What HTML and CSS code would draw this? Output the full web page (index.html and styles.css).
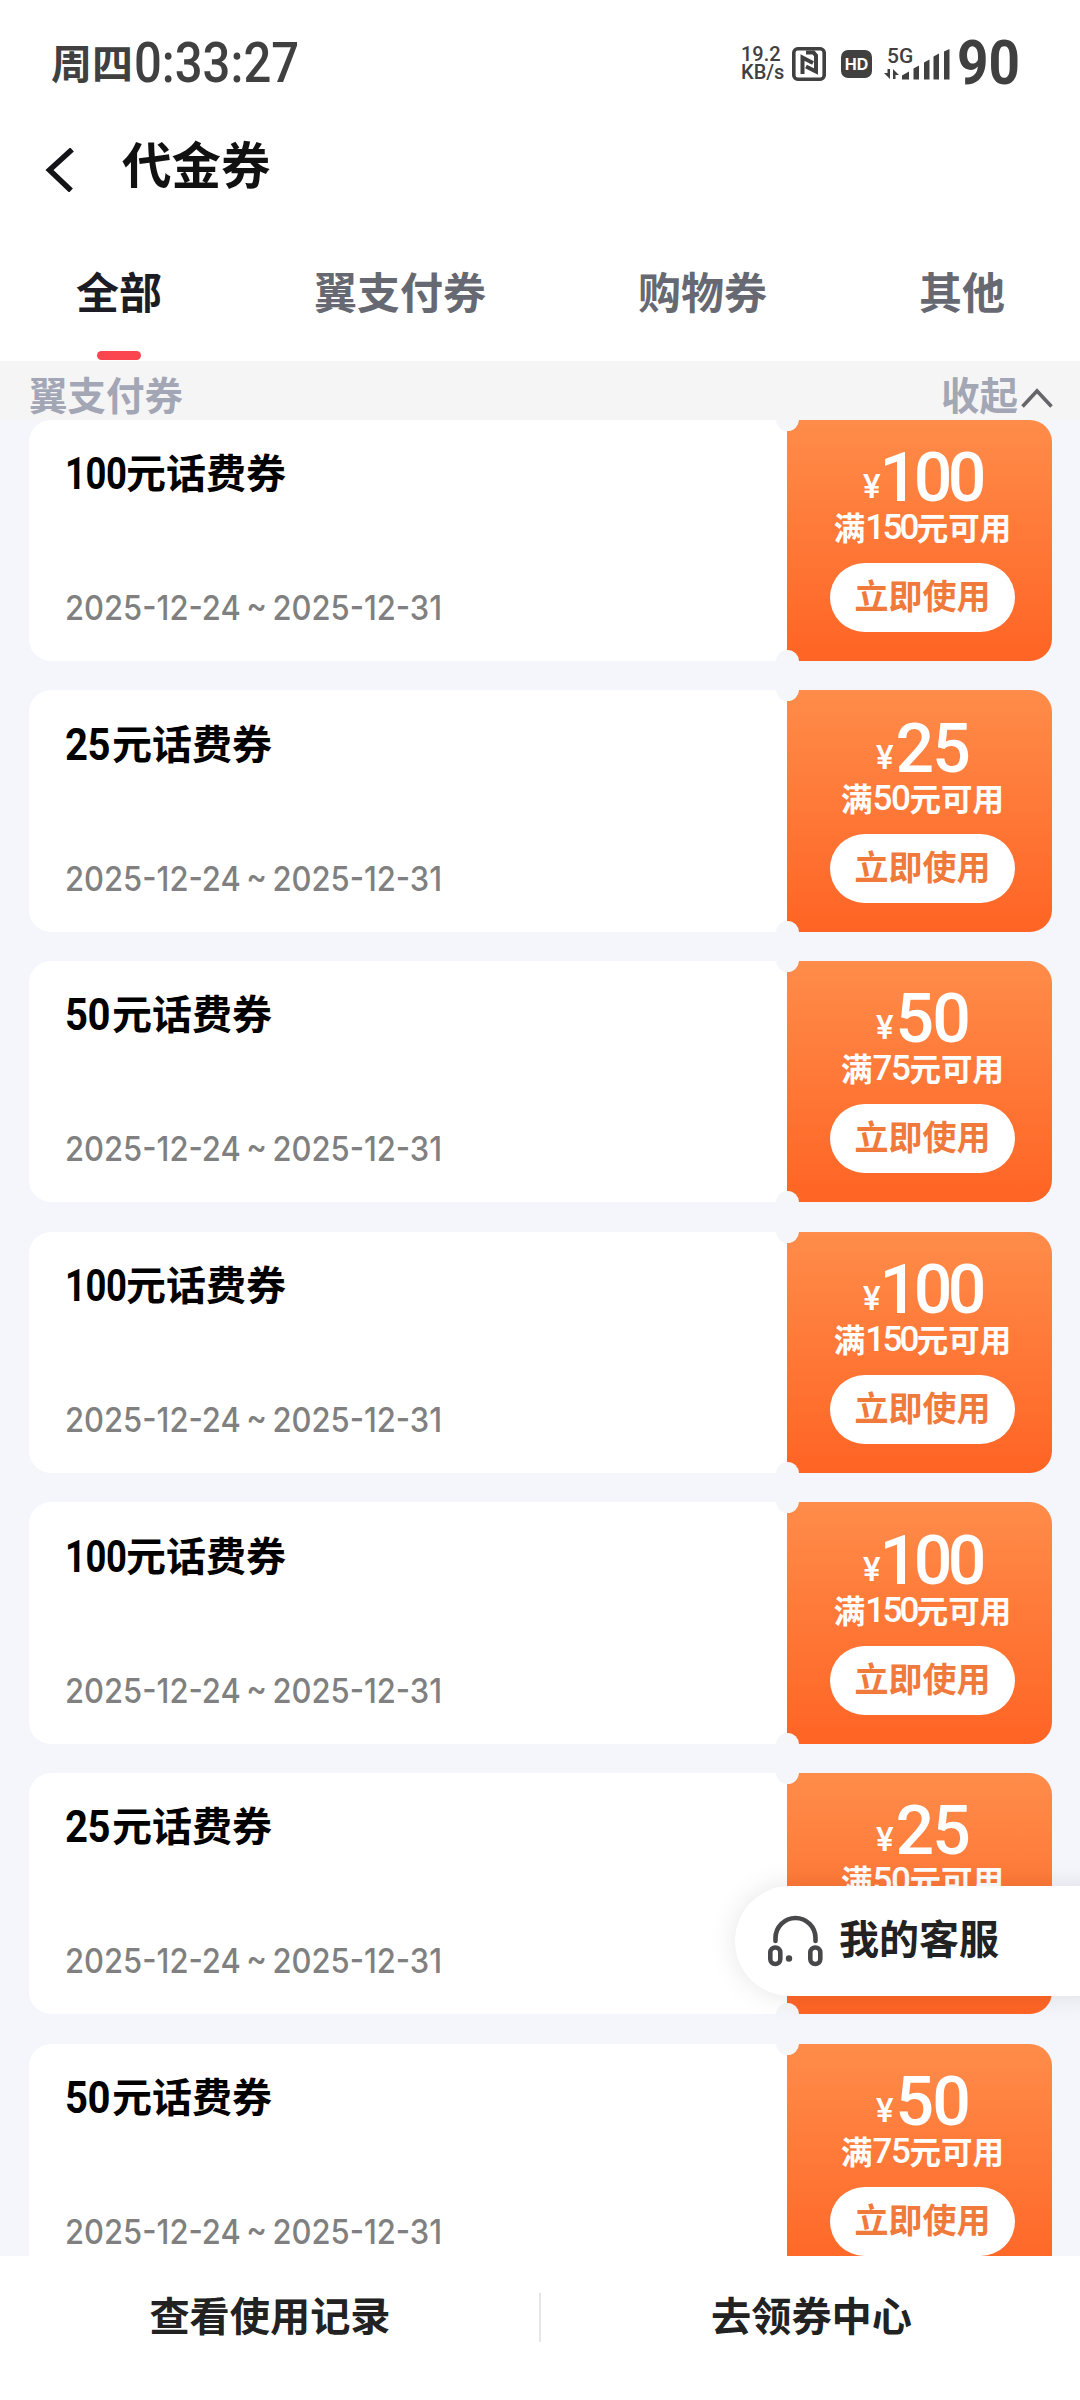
FILE: index.html
```
<!DOCTYPE html>
<html lang="zh-CN">
<head>
<meta charset="utf-8">
<title>代金券</title>
<link rel="stylesheet" href="styles.css">
</head>
<body>
<div class="screen">
  <header class="top">
    <div class="status">
      <div class="clock"><span class="day">周四</span><span class="time">0:33:27</span></div>
      <div class="indicators">
        <div class="speed"><span>19.2</span><span>KB/s</span></div>
        <svg class="nfc" viewBox="0 0 34 34"><rect x="1.8" y="1.800" width="30.4" height="30.4" rx="4" fill="none" stroke="#404040" stroke-width="3.600"/><path d="M10.500 27V10.500L21 16M14 5.500h7.500l2.500 3V24.500L14 19.500" fill="none" stroke="#404040" stroke-width="4"/></svg>
        <span class="hd">HD</span>
        <div class="net">
          <span class="gen">5G</span>
          <svg class="signal" viewBox="0 0 66 32"><path d="M0 24h3.500v-4h2.500v10zM9 30V20l6 6h-3.500v4z" fill="#404040"/><path d="M18 30.500v-4l7-4v8zM29.500 30.500v-11l5.500-3v14zM40 30.500v-17l5.500-3v20zM49.500 30.500V7.500l5.500-3v26zM60 30.500v-28l5.500-2.500v30.500z" fill="#404040"/></svg>
        </div>
        <span class="battery">90</span>
      </div>
    </div>
    <div class="titlebar">
      <svg class="back" viewBox="0 0 30 44"><path d="M27 1.500L4.500 22 26 42.500" fill="none" stroke="#141418" stroke-width="5.500"/></svg>
      <h1>代金券</h1>
    </div>
    <nav class="tabs">
      <a class="tab active">全部</a>
      <a class="tab">翼支付券</a>
      <a class="tab">购物券</a>
      <a class="tab">其他</a>
    </nav>
  </header>

  <div class="section">
    <span>翼支付券</span>
    <span class="fold">收起<svg viewBox="0 0 32 21"><path d="M1.500 18.500L16 3l14.500 15.500" fill="none" stroke="#66666a" stroke-width="3.600"/></svg></span>
  </div>

  <main class="list">
    <article class="card">
      <div class="info"><h2><span class="num n3">100</span>元话费券</h2><p class="date">2025-12-24 ~ 2025-12-31</p></div>
      <div class="offer"><div class="price"><i>¥</i><b class="n3">100</b></div><p class="rule">满<span class="n3">150</span>元可用</p><a class="use">立即使用</a></div>
    </article>
    <article class="card">
      <div class="info"><h2><span class="num">25</span>元话费券</h2><p class="date">2025-12-24 ~ 2025-12-31</p></div>
      <div class="offer"><div class="price"><i>¥</i><b>25</b></div><p class="rule">满<span>50</span>元可用</p><a class="use">立即使用</a></div>
    </article>
    <article class="card">
      <div class="info"><h2><span class="num">50</span>元话费券</h2><p class="date">2025-12-24 ~ 2025-12-31</p></div>
      <div class="offer"><div class="price"><i>¥</i><b>50</b></div><p class="rule">满<span>75</span>元可用</p><a class="use">立即使用</a></div>
    </article>
    <article class="card">
      <div class="info"><h2><span class="num n3">100</span>元话费券</h2><p class="date">2025-12-24 ~ 2025-12-31</p></div>
      <div class="offer"><div class="price"><i>¥</i><b class="n3">100</b></div><p class="rule">满<span class="n3">150</span>元可用</p><a class="use">立即使用</a></div>
    </article>
    <article class="card">
      <div class="info"><h2><span class="num n3">100</span>元话费券</h2><p class="date">2025-12-24 ~ 2025-12-31</p></div>
      <div class="offer"><div class="price"><i>¥</i><b class="n3">100</b></div><p class="rule">满<span class="n3">150</span>元可用</p><a class="use">立即使用</a></div>
    </article>
    <article class="card">
      <div class="info"><h2><span class="num">25</span>元话费券</h2><p class="date">2025-12-24 ~ 2025-12-31</p></div>
      <div class="offer"><div class="price"><i>¥</i><b>25</b></div><p class="rule">满<span>50</span>元可用</p><a class="use">立即使用</a></div>
    </article>
    <article class="card">
      <div class="info"><h2><span class="num">50</span>元话费券</h2><p class="date">2025-12-24 ~ 2025-12-31</p></div>
      <div class="offer"><div class="price"><i>¥</i><b>50</b></div><p class="rule">满<span>75</span>元可用</p><a class="use">立即使用</a></div>
    </article>
  </main>

  <footer class="bottom">
    <a>查看使用记录</a>
    <a>去领券中心</a>
  </footer>

  <a class="service">
    <svg viewBox="0 0 56 52"><g fill="none" stroke="#48484a" stroke-width="4.600"><path d="M7.500 26v-3a20 20 0 0 1 40 0v3" stroke-linecap="round"/><rect x="2.300" y="32.500" width="10" height="16.500" rx="5"/><rect x="42.300" y="32.500" width="10" height="16.500" rx="5"/></g><circle cx="21" cy="43.500" r="3.200" fill="#48484a"/></svg>
    <span>我的客服</span>
  </a>
</div>
</body>
</html>
```
FILE: styles.css
```
* { box-sizing: border-box; margin: 0; padding: 0; }

body {
  font-family: "Noto Sans CJK SC", sans-serif;
  background: #f4f6fb;
}

.screen {
  position: relative;
  display: flex;
  flex-direction: column;
  width: 1080px;
  height: 2400px;
  overflow: hidden;
  background: #f4f6fb;
}

.top { height: 361px; flex: none; background: #fff; }

/* status bar */
.status {
  display: flex;
  justify-content: space-between;
  height: 124px;
  padding: 32px 62px 0 51px;
  color: #404040;
}
.clock { display: flex; height: 60px; line-height: 58px; }
.day { width: 83px; font-size: 41px; font-weight: 700; }
.time {
  width: 165px;
  font: 500 56px/63px Roboto, sans-serif;
  transform: scaleX(.875);
  transform-origin: left;
  white-space: nowrap;
}
.indicators { display: flex; height: 60px; }
.speed {
  display: flex;
  flex-direction: column;
  width: 51px;
  padding-top: 13px;
  font: 500 20px/18px Roboto, sans-serif;
}
.nfc { width: 34px; height: 34px; margin-top: 15px; }
.hd {
  width: 31px;
  height: 28px;
  margin: 18px 0 0 15px;
  border-radius: 7px;
  background: #404040;
  color: #fff;
  font: 700 16px/28px Inter, sans-serif;
  text-align: center;
}
.net { position: relative; width: 66px; height: 60px; margin-left: 12px; }
.gen { position: absolute; left: 3px; top: 13px; font: 500 21px/22px Roboto, sans-serif; }
.signal { display: block; width: 66px; height: 32px; margin-top: 17px; }
.battery {
  width: 61px;
  margin-left: 7px;
  font: 700 61px/62px Roboto, sans-serif;
  transform: scaleX(.9);
  transform-origin: left;
}

/* title bar */
.titlebar { display: flex; height: 116px; padding-left: 45px; }
.back { width: 30px; height: 44px; margin-top: 24px; }
h1 { margin-left: 47px; font-size: 49.500px; font-weight: 700; line-height: 78px; color: #111; }

/* tabs */
.tabs {
  display: flex;
  justify-content: space-between;
  height: 121px;
  padding: 20px 75px 0 76px;
}
.tab { position: relative; font-size: 43px; font-weight: 700; line-height: 60px; color: #666972; }
.active { color: #1b1c24; }
.active::after {
  content: "";
  position: absolute;
  left: 21px;
  top: 91px;
  width: 44px;
  height: 9px;
  border-radius: 5px;
  background: #fb4650;
}

/* section heading */
.section {
  display: flex;
  flex: none;
  justify-content: space-between;
  height: 58.700px;
  padding: 4px 27px 0 29px;
  background: #f5f5f5;
  color: #a3a6b5;
  font-size: 38.500px;
  font-weight: 700;
  line-height: 56px;
}
.fold { display: flex; }
.fold svg { width: 32px; height: 21px; margin: 23px 0 0 3px; }

/* coupons */
.list {
  display: flex;
  flex: 1;
  flex-direction: column;
  gap: 29.350px;
  min-height: 0;
  overflow: hidden;
  padding: 0 28px 0 29px;
}
.card {
  position: relative;
  display: flex;
  flex: none;
  height: 241.300px;
  border-radius: 22px;
  background: #fff;
  overflow: hidden;
}
.card::before, .card::after {
  content: "";
  position: absolute;
  left: 747px;
  width: 23px;
  height: 23px;
  border-radius: 50%;
  background: #f5f6f9;
}
.card::before { top: -12px; }
.card::after { bottom: -12px; }
.info { width: 758px; padding: 21.500px 0 0 36px; }
h2 { display: flex; height: 60px; font-size: 40px; font-weight: 700; line-height: 60px; color: #000; }
.num {
  width: 47px;
  font: 700 45px/65px Roboto, sans-serif;
  letter-spacing: -.5px;
  transform: scaleX(.89);
  transform-origin: left;
}
.num.n3 { width: 61px; transform: scaleX(.81); }
.date {
  margin-top: 82px;
  font: 500 34px/50px Inter, sans-serif;
  color: #808080;
  white-space: nowrap;
  word-spacing: -3px;
  transform: scaleX(.91);
  transform-origin: left;
}
.offer {
  display: flex;
  flex: 1;
  flex-direction: column;
  align-items: center;
  padding: 27.500px 0 0 6px;
  background: linear-gradient(#ff8c4a, #ff6424);
  color: #fff;
}
.price { display: flex; height: 60px; }
.price i { font: 500 33px/79px Roboto, sans-serif; margin-right: 2px; }
.price b { font: 500 68px/62px Roboto, sans-serif; letter-spacing: -2px; }
.price b.n3 { margin-left: -3px; letter-spacing: -4.500px; }
.rule { display: flex; height: 40px; font-size: 31.500px; font-weight: 700; line-height: 38px; }
.rule span { font: 500 35px/42px Roboto, sans-serif; letter-spacing: -1.500px; }
.rule span.n3 { letter-spacing: -2.800px; }
.use {
  width: 185px;
  height: 69px;
  margin-top: 16px;
  border-radius: 35px;
  background: #fff;
  color: #f07a3c;
  font-size: 34px;
  font-weight: 700;
  line-height: 64px;
  text-align: center;
}

/* bottom actions */
.bottom {
  display: flex;
  flex: none;
  height: 144px;
  background: #fff;
  color: #222;
  font-size: 40.200px;
  font-weight: 700;
  line-height: 115px;
}
.bottom a { position: relative; flex: none; width: 540px; text-align: center; }
.bottom a + a { padding-left: 3px; }
.bottom a + a::before {
  content: "";
  position: absolute;
  left: -1px;
  top: 37px;
  width: 2px;
  height: 49px;
  background: #e6e6e6;
}

/* floating support entry */
.service {
  position: absolute;
  left: 735px;
  top: 1886px;
  display: flex;
  width: 365px;
  height: 110px;
  padding-left: 33px;
  border-radius: 55px 0 0 55px;
  background: #fff;
  box-shadow: 0 0 28px rgba(0, 0, 0, .1);
  color: #222;
  font-size: 40px;
  font-weight: 700;
  line-height: 102px;
}
.service svg { width: 56px; height: 52px; margin: 29px 15px 0 0; }
```
